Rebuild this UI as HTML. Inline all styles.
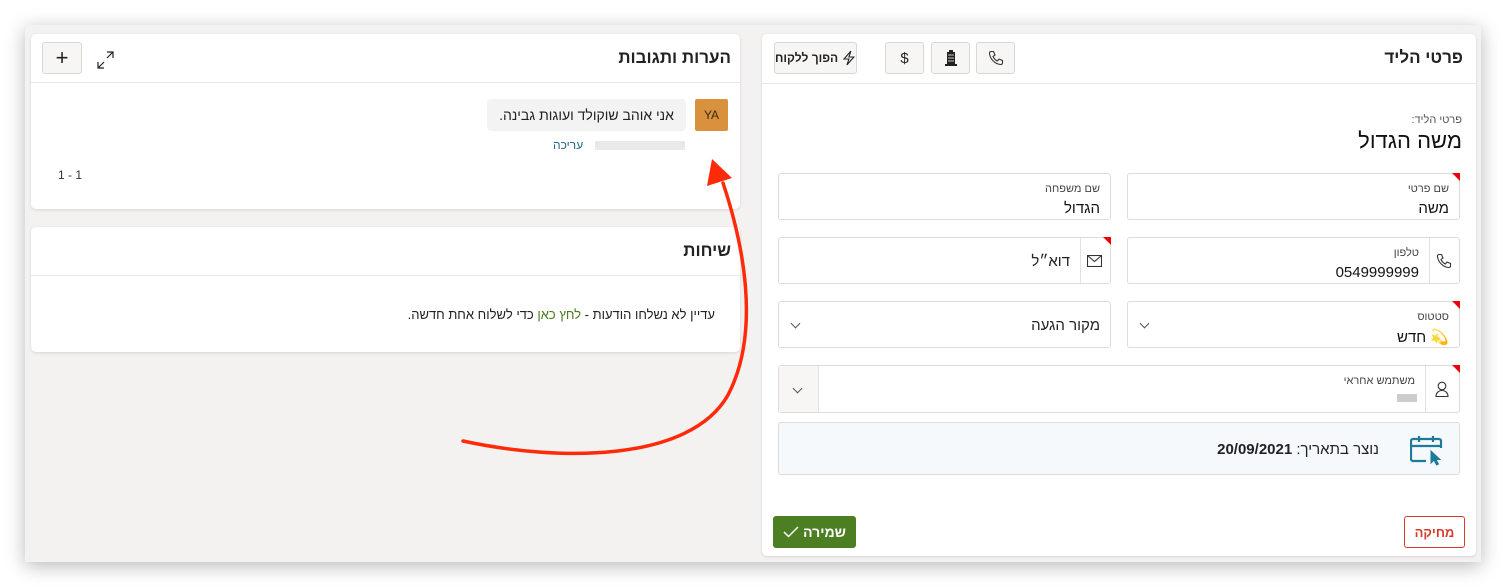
<!DOCTYPE html>
<html><head><meta charset="utf-8"><style>
*{box-sizing:border-box;margin:0;padding:0}
body{width:1506px;height:587px;background:#fff;font-family:"Liberation Sans","DejaVu Sans",sans-serif;color:#222;position:relative;overflow:hidden}
.frame{position:absolute;left:25px;top:25px;width:1456px;height:537px;background:#f3f2f1;box-shadow:0 4px 18px rgba(0,0,0,.28)}
.card{position:absolute;background:#fff;border-radius:5px;box-shadow:0 1px 3px rgba(0,0,0,.12)}
.abs{position:absolute;white-space:nowrap}
.hline{position:absolute;left:0;right:0;height:1px;background:#e8e8e8}
.btn{position:absolute;border:1px solid #d9d7d4;background:#f7f6f4;border-radius:3px;display:flex;align-items:center;justify-content:center;font-size:12px;font-weight:bold;white-space:nowrap}
.field{position:absolute;border:1px solid #dcdcdc;border-radius:3px;background:#fff}
.lbl{position:absolute;right:10px;top:9px;font-size:11px;color:#444;white-space:nowrap}
.val{position:absolute;right:10px;top:26px;font-size:15px;color:#111;white-space:nowrap}
.red{position:absolute;right:-1px;top:-1px;width:0;height:0;border-top:8px solid #e00;border-left:8px solid transparent}
.chev{position:absolute;width:7px;height:7px;border-right:1.2px solid #555;border-bottom:1.2px solid #555;transform:rotate(45deg)}
</style></head><body>
<div class="frame"></div>

<!-- left card 1 -->
<div class="card" style="left:31px;top:34px;width:709px;height:175px">
  <div class="abs" style="right:9px;top:14px;font-size:17px;font-weight:bold" dir="rtl">הערות ותגובות</div>
  <div class="btn" style="left:11px;top:8px;width:40px;height:32px;font-size:22px;font-weight:normal">+</div>
  <svg class="abs" style="left:66px;top:17px" width="18" height="18" viewBox="0 0 18 18" fill="none" stroke="#222" stroke-width="1.2"><path d="M10 1h6v6M16 1l-6 6M1 11v6h6M1 17l6-6"/></svg>
  <div class="hline" style="top:48px"></div>
  <div class="abs" style="right:12px;top:65px;width:33px;height:32px;background:#d9913e;border-radius:2px;font-size:12px;display:flex;align-items:center;justify-content:center;color:#3a2a10">YA</div>
  <div class="abs" style="right:54px;top:65px;width:199px;height:32px;background:#f3f3f3;border-radius:4px;font-size:14px;display:flex;align-items:center;justify-content:center" dir="rtl">אני אוהב שוקולד ועוגות גבינה.</div>
  <div class="abs" style="right:55px;top:107px;width:90px;height:9px;background:#e4e4e4;opacity:.8"></div>
  <div class="abs" style="left:522px;top:104px;font-size:12px;color:#2a6a8a">עריכה</div>
  <div class="abs" style="left:27px;top:134px;font-size:12px;color:#333">1 - 1</div>
</div>

<!-- left card 2 -->
<div class="card" style="left:31px;top:227px;width:709px;height:125px">
  <div class="abs" style="right:9px;top:14px;font-size:17px;font-weight:bold">שיחות</div>
  <div class="hline" style="top:48px"></div>
  <div class="abs" style="right:25px;top:80px;font-size:13px" dir="rtl">עדיין לא נשלחו הודעות - <span style="color:#4a7a1e">לחץ כאן</span> כדי לשלוח אחת חדשה.</div>
</div>

<!-- right card -->
<div class="card" style="left:762px;top:34px;width:714px;height:522px">
  <div class="abs" style="right:13px;top:14px;font-size:17px;font-weight:bold">פרטי הליד</div>
  <div class="btn" style="left:12px;top:8px;width:83px;height:32px" dir="rtl"><svg width="14" height="16" viewBox="0 0 14 16" fill="none" stroke="#222" stroke-width="1.1" style="margin-left:4px"><path d="M9 1L2 9h5l-2 6 7-8H7z"/></svg>הפוך ללקוח</div>
  <div class="btn" style="left:123px;top:8px;width:39px;height:32px;font-weight:normal;font-size:15px">$</div>
  <div class="btn" style="left:169px;top:8px;width:39px;height:32px"><svg width="12" height="16" viewBox="0 0 12 16"><rect x="2" y="2" width="8" height="13" fill="#222"/><rect x="4" y="0" width="4" height="3" fill="#222"/><path d="M3 5h6M3 8h6M3 11h6" stroke="#fff" stroke-width=".8"/><rect x="0" y="14" width="12" height="2" fill="#222"/></svg></div>
  <div class="btn" style="left:214px;top:8px;width:39px;height:32px"><svg width="16" height="16" viewBox="0 0 16 16" fill="none" stroke="#333" stroke-width="1.1"><path d="M3 1.5l2.5 0 1.5 3.5-2 1.5c1 2.2 2.5 3.7 4.5 4.5l1.5-2 3.5 1.5v2.5c0 1-1 1.5-2 1.5C7 14 2 9 1.5 3.5c0-1 .5-2 1.5-2z"/></svg></div>
  <div class="hline" style="top:49px"></div>
  <div class="abs" style="right:14px;top:80px;font-size:11px;color:#555" dir="rtl">פרטי הליד:</div>
  <div class="abs" style="right:14px;top:94px;font-size:22px;color:#111">משה הגדול</div>
</div>

<!-- fields -->
<div class="field" style="left:1127px;top:173px;width:333px;height:47px"><div class="red"></div><div class="lbl">שם פרטי</div><div class="val">משה</div></div>
<div class="field" style="left:778px;top:173px;width:333px;height:47px"><div class="lbl">שם משפחה</div><div class="val">הגדול</div></div>

<div class="field" style="left:1127px;top:237px;width:333px;height:47px">
  <div class="abs" style="right:0;top:0;width:30px;height:45px;border-left:1px solid #e2e2e2"></div>
  <svg class="abs" style="right:7px;top:15px" width="16" height="16" viewBox="0 0 16 16" fill="none" stroke="#333" stroke-width="1.1"><path d="M3 1.5l2.5 0 1.5 3.5-2 1.5c1 2.2 2.5 3.7 4.5 4.5l1.5-2 3.5 1.5v2.5c0 1-1 1.5-2 1.5C7 14 2 9 1.5 3.5c0-1 .5-2 1.5-2z"/></svg>
  <div class="lbl" style="right:40px">טלפון</div><div class="val" style="right:40px">0549999999</div></div>
<div class="field" style="left:778px;top:237px;width:333px;height:47px"><div class="red"></div>
  <div class="abs" style="right:0;top:0;width:30px;height:45px;border-left:1px solid #e2e2e2"></div>
  <svg class="abs" style="right:8px;top:17px" width="15" height="12" viewBox="0 0 15 12" fill="none" stroke="#333" stroke-width="1.1"><rect x=".5" y=".5" width="14" height="11"/><path d="M.5 .5l7 6 7-6"/></svg>
  <div class="abs" style="right:40px;top:15px;font-size:15px">דוא״ל</div></div>

<div class="field" style="left:1127px;top:301px;width:333px;height:47px"><div class="red"></div><div class="lbl">סטטוס</div><div class="val" dir="rtl">💫 חדש</div><div class="chev" style="left:13px;top:18px"></div></div>
<div class="field" style="left:778px;top:301px;width:333px;height:47px"><div class="abs" style="right:10px;top:15px;font-size:15px">מקור הגעה</div><div class="chev" style="left:13px;top:18px"></div></div>

<div class="field" style="left:778px;top:365px;width:682px;height:48px"><div class="red"></div>
  <div class="abs" style="left:0;top:0;width:40px;height:46px;background:#f7f6f4;border-right:1px solid #e2e2e2"></div><div class="chev" style="left:15px;top:19px"></div>
  <div class="abs" style="right:0;top:0;width:34px;height:46px;border-left:1px solid #e2e2e2"></div>
  <svg class="abs" style="right:10px;top:15px" width="14" height="16" viewBox="0 0 14 16" fill="none" stroke="#333" stroke-width="1.1"><circle cx="7" cy="5" r="3.8"/><path d="M1 15.5c0-3.5 2.5-6 6-6s6 2.5 6 6z"/></svg>
  <div class="lbl" style="right:44px">משתמש אחראי</div>
  <div class="abs" style="right:42px;top:28px;width:20px;height:8px;background:#ccc"></div>
</div>

<div class="field" style="left:778px;top:422px;width:682px;height:53px;background:#f5f9fc">
  <svg class="abs" style="right:15px;top:12px" width="34" height="32" viewBox="0 0 34 32" fill="none" stroke="#1f7a9a" stroke-width="2.2"><path d="M16 26H3a2 2 0 0 1-2-2V6a2 2 0 0 1 2-2h26a2 2 0 0 1 2 2v7M1 11h30M9 1v6M23 1v6"/><path d="M21 16l0 12 3-3 2.5 5 2-1-2.5-4.5h4z" fill="#1f7a9a" stroke-width="1"/></svg>
  <div class="abs" style="right:80px;top:18px;font-size:15px" dir="rtl">נוצר בתאריך: <b>20/09/2021</b></div>
</div>

<div class="abs" style="left:1404px;top:516px;width:61px;height:32px;border:1px solid #d83b2a;border-radius:3px;color:#d83b2a;font-size:13px;font-weight:bold;display:flex;align-items:center;justify-content:center">מחיקה</div>
<div class="abs" style="left:773px;top:516px;width:83px;height:32px;background:#4b7f22;border-radius:3px;color:#fff;font-size:14px;font-weight:bold;display:flex;align-items:center;justify-content:center" dir="rtl"><span>שמירה</span><svg width="16" height="12" viewBox="0 0 16 12" fill="none" stroke="#fff" stroke-width="1.5" style="margin-right:4px"><path d="M1 6l4.5 4.5L15 1"/></svg></div>

<!-- arrow -->
<svg class="abs" style="left:0;top:0" width="1506" height="587">
  <path d="M463,441 C560,462 690,462 728,395 C762,330 742,240 723,183" fill="none" stroke="#ff2a0a" stroke-width="3.5" stroke-linecap="round"/>
  <polygon points="712,159 707,186 732,178" fill="#ff2a0a"/>
</svg>
</body></html>
